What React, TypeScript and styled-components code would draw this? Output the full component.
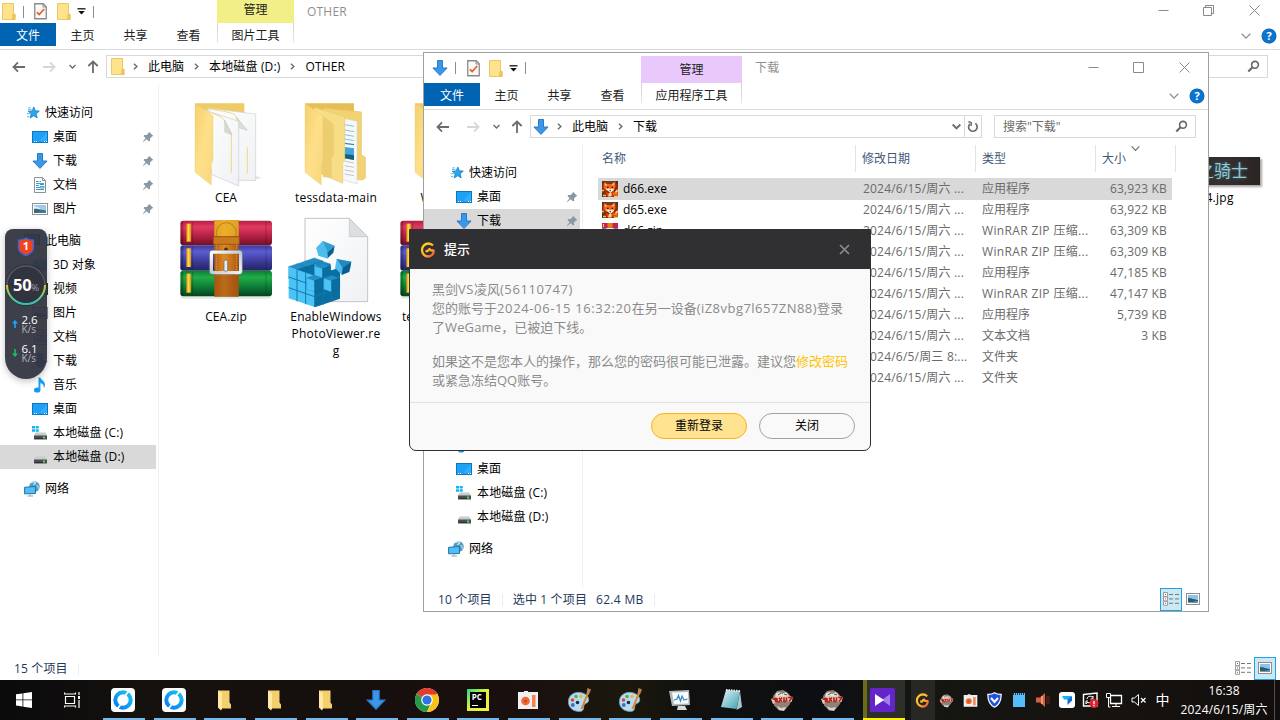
import React from "react";
import styled, { createGlobalStyle, css } from "styled-components";

const GlobalStyle = createGlobalStyle`
  * { box-sizing: border-box; }
  body { margin: 0; overflow: hidden; background: #fff; }
  #root { font: 12px/16px "Open Sans", "Noto Sans CJK SC", sans-serif; color: #000; }
  svg { display: block; flex: none; }
`;

/* ---------- shared ---------- */

const Desktop = styled.div`
  position: relative;
  width: 1280px;
  height: 720px;
  overflow: hidden;
  background: #fff;
`;

const Text = styled.span<{ $ls?: number }>`
  white-space: pre;
  letter-spacing: ${(p) => p.$ls ?? 0}px;
`;

/* ---------- small icons ---------- */

const FolderIcon = () => (
  <svg width="14" height="17" viewBox="0 0 14 17">
    <path d="M.5.5h11v10.5l1.5 1v4.500H.5z" fill="#ffe28c" stroke="#ecc862" />
    <path d="M10.800 16V12l2.200-1v5z" fill="#f7d36f" stroke="#dfb445" strokeWidth=".8" />
  </svg>
);

const CheckDocIcon = () => (
  <svg width="13" height="17" viewBox="0 0 13 17">
    <path d="M.75.75h8.500l3 3v12H.75z" fill="#fafafa" stroke="#8a8a8a" strokeWidth="1.300" />
    <path d="M9 1v3h3" fill="none" stroke="#8a8a8a" />
    <path d="M2.800 9.300l2.400 2.200 5-5.500" fill="none" stroke="#e4622d" strokeWidth="1.800" />
  </svg>
);

const DownArrowIcon = ({ size = 16 }: { size?: number }) => (
  <svg width={size} height={size} viewBox="0 0 16 16">
    <path d="M5.500.5h5v7.500h4.600L8 15.400.9 8h4.600z" fill="#3b97e8" stroke="#2a7ac6" />
  </svg>
);

const StarIcon = () => (
  <svg width="16" height="16" viewBox="0 0 16 16">
    <path d="M9.800 2l1.500 3.800 4 .3-3.100 2.700 1 4.100-3.500-2.200-3.500 2.300 1-4.200L4.200 6.200l4-.3z" fill="#2aa5ee" stroke="#1b7cc2" strokeWidth=".8" />
    <path d="M4 4.300h3.400M2.800 8.700h3M3 11.700h2.300M4.500 2.800h2" stroke="#4ab8f5" />
  </svg>
);

const DesktopIcon = () => (
  <svg width="16" height="16" viewBox="0 0 16 16">
    <rect x=".5" y="2.500" width="15" height="11" fill="#1ba1f6" stroke="#0e75bf" />
    <path d="M15 3v9L7 12z" fill="#3cb2fb" opacity=".7" />
    <path d="M2 12.500h1M4 12.500h1M12 12.500h1M14 12.500h1" stroke="#fff" />
  </svg>
);

const DocIcon = () => (
  <svg width="16" height="16" viewBox="0 0 16 16">
    <path d="M2.500.5h8l3 3v12h-11z" fill="#fdfdfd" stroke="#8d9295" />
    <path d="M10.500.5v3h3" fill="none" stroke="#8d9295" />
    <path d="M4 4.500h2.500M7.500 4.500H9M4 8.500h3M8 7.500h4M4 10.500h4M4 12.500h8" stroke="#3e94c6" />
    <path d="M4 6.500h8M8.500 9.500H12v1.500H8.500z" stroke="#2fa9d8" fill="none" />
  </svg>
);

const PictureIcon = () => (
  <svg width="16" height="16" viewBox="0 0 16 16">
    <rect x=".5" y="2.500" width="15" height="11" fill="#fff" stroke="#8e9294" />
    <rect x="2" y="4" width="12" height="8" fill="#9cc9ee" />
    <path d="M2 5l4 1 3 2-7 1z" fill="#dfeefa" />
    <path d="M2 8c3-1 5 .5 12 1.500V12H2z" fill="#3d6a6b" />
    <path d="M5 12c3-2 6-2 9-2v2z" fill="#3a79b8" />
  </svg>
);

const PcIcon = () => (
  <svg width="16" height="16" viewBox="0 0 16 16">
    <rect x=".5" y="1.500" width="15" height="10" fill="#4db4ef" stroke="#4c6a7d" />
    <path d="M6 12h4v1.500h2v1H4v-1h2z" fill="#7a8a94" />
  </svg>
);

const CubeIcon = () => (
  <svg width="16" height="16" viewBox="0 0 16 16">
    <path d="M8 1l7 2.500v9L8 15.500 1 12.500v-9z" fill="#27b0cf" />
    <path d="M8 6l7-2.500v9L8 15.500z" fill="#1c98c4" />
    <path d="M8 1l7 2.500L8 6 1 3.500z" fill="#7fdcf0" />
  </svg>
);

const VideoIcon = () => (
  <svg width="16" height="16" viewBox="0 0 16 16">
    <rect x=".5" y="2.500" width="15" height="11" fill="#555" stroke="#333" />
    <rect x="3" y="4" width="10" height="8" fill="#7ec1ef" />
  </svg>
);

const MusicIcon = () => (
  <svg width="16" height="16" viewBox="0 0 16 16">
    <ellipse cx="5.200" cy="13" rx="3.200" ry="2.600" fill="#0d99f5" />
    <path d="M6.500 13V.5h1.900c.4 2.400 4.600 3.600 4.600 7 0 1.600-.6 2.800-1.500 3.500.8-2.600-.6-4.200-3.100-5V13z" fill="#149df7" />
  </svg>
);

const DriveIcon = ({ system }: { system?: boolean }) => (
  <svg width="16" height="16" viewBox="0 0 16 16">
    {system && <path d="M0 1h3v2.500H0zM3.700 1h3v2.500h-3zM0 4.200h3v2.500H0zM3.700 4.200h3v2.500h-3z" fill="#15b2f2" />}
    <path d="M3.500 7.500h10l1.500 3.500H2z" fill="#c9cccf" />
    <rect x="2" y="10.500" width="13" height="4" fill="#4b4e50" />
    <path d="M3 13.500h9" stroke="#2d2f30" />
    <rect x="11" y="11.500" width="2" height="2" fill="#4be04b" />
  </svg>
);

const NetworkIcon = () => (
  <svg width="16" height="16" viewBox="0 0 16 16">
    <circle cx="10.500" cy="5.500" r="5.200" fill="#4f9bc4" />
    <path d="M7 1.800c1.500-1.200 3.500-1 4.500-.3.500 1-1.500 1.200-2 2.500" fill="none" stroke="#cfe6f2" strokeWidth="1.300" />
    <path d="M12.500 4.500c1.500 0 2 1.500 1.500 3" fill="none" stroke="#a9d3ea" strokeWidth="1.300" />
    <path d="M.6 6.300l10.800-.8v7l-10.800.3z" fill="#55bdf7" stroke="#1c76ac" />
    <path d="M3.500 15h5.500M6 13v1.500" stroke="#8fa4af" />
  </svg>
);

const PinIcon = () => (
  <svg width="12" height="12" viewBox="0 0 12 12">
    <path d="M7 .8l4.300 4.300-1.300.4-2 2 .2 2.300-1.200.7-2.200-2.300L1.200 11l-.4-.3 2.800-3.500L1.500 5l.8-1.100 2.300.1 2-2z" fill="#8b98a3" />
  </svg>
);

const ChevronSmall = ({ dir = "right", size = 7, color = "#6d6d6d", width = 1.6 }: { dir?: "right" | "down"; size?: number; color?: string; width?: number }) => (
  <svg width={size} height={size} viewBox="0 0 8 8">
    <path d={dir === "right" ? "M2.200.8L5.600 4 2.200 7.200" : "M.6 2.200L4 5.700l3.400-3.500"} fill="none" stroke={color} strokeWidth={width} />
  </svg>
);

const ArrowGlyph = ({ kind, color }: { kind: "left" | "right" | "up"; color: string }) => (
  <svg width="14" height="14" viewBox="0 0 14 14">
    <g transform={`rotate(${kind === "left" ? 0 : kind === "up" ? 90 : 180} 7 7)`}>
      <path d="M13 7H1.800M6 2.300L1.500 7 6 11.700" fill="none" stroke={color} strokeWidth="1.800" />
    </g>
  </svg>
);

const SearchGlyph = () => (
  <svg width="13" height="13" viewBox="0 0 13 13">
    <circle cx="8" cy="4.800" r="3.400" fill="none" stroke="#666" strokeWidth="1.600" />
    <path d="M5.500 7.300L1.300 11.500" stroke="#666" strokeWidth="2" />
  </svg>
);

const HelpGlyph = styled.span`
  width: 14px;
  height: 14px;
  border-radius: 50%;
  background: #0b74d1;
  box-shadow: 0 0 0 .5px #07589f;
  color: #fff;
  font: bold 11px/14px "Open Sans", sans-serif;
  text-align: center;
`;

const DetailsGlyph = () => (
  <svg width="17" height="14" viewBox="0 0 17 14">
    <path d="M.5.500h4v4h-4zM.5 4.900h4v4h-4zM.5 9.300h4v4h-4z" fill="#fff" stroke="#9b9b9b" />
    <path d="M2 2.500h1M2 6.900h1M2 11.300h1" stroke="#7a5b5b" />
    <path d="M6 2.500h4M12 2.500h4M6 6.900h4M12 6.900h4M6 11.300h4M12 11.300h4" stroke="#777" />
  </svg>
);

const ThumbGlyph = () => (
  <svg width="14" height="12" viewBox="0 0 14 12">
    <rect x=".5" y=".5" width="13" height="11" fill="#fff" stroke="#8e8e8e" />
    <rect x="2" y="2" width="10" height="7.500" fill="#8fc0ee" />
    <path d="M2 5c3 0 5 1 10 2v2.500H2z" fill="#2e5f66" />
    <path d="M6 9.500c2-1.500 4-1.500 6-1.500v1.500z" fill="#4a8fd0" />
  </svg>
);

/* ---------- explorer window ---------- */

const WindowFrame = styled.section<{ $floating?: boolean }>`
  position: absolute;
  display: flex;
  flex-direction: column;
  background: #fff;
  ${(p) =>
    p.$floating
      ? css`left: 423px; top: 52px; width: 786px; height: 560px; border: 1px solid #a0a0a0;`
      : css`left: 0; top: 0; width: 1280px; height: 680px;`}
`;

const TitleBar = styled.div<{ $h: number }>`
  display: flex;
  height: ${(p) => p.$h}px;
  padding-right: ${(p) => (p.$h === 23 ? 2 : 0)}px;
`;

const QuickBar = styled.div<{ $pad: number }>`
  display: flex;
  align-items: center;
  width: 217px;
  padding-left: ${(p) => p.$pad}px;
`;

const Divider = styled.span<{ $ml?: number; $mr?: number }>`
  width: 1px;
  height: 12px;
  margin: 0 ${(p) => p.$mr ?? 0}px 0 ${(p) => p.$ml ?? 0}px;
  background: #8c8c8c;
`;

const Gap = styled.span<{ $w: number }>`
  width: ${(p) => p.$w}px;
  flex: none;
`;

const ContextTab = styled.div<{ $color: string; $w: number; $top: number }>`
  width: ${(p) => p.$w}px;
  margin-top: ${(p) => p.$top}px;
  padding-top: ${(p) => (p.$top ? 6 : 2)}px;
  background: ${(p) => p.$color};
  color: #222;
  text-align: center;
`;

const WindowTitle = styled.div<{ $top: number }>`
  flex: 1;
  padding: ${(p) => p.$top}px 0 0 13px;
  color: #8f8f8f;
  letter-spacing: 0.2px;
`;

const WindowButtons = styled.div<{ $top: number }>`
  display: flex;
  margin-top: ${(p) => p.$top}px;
  padding-right: 1px;
`;

const WindowButton = styled.div`
  width: 45.5px;
  height: 20px;
  display: flex;
  align-items: center;
  justify-content: center;
`;

const Ribbon = styled.div`
  display: flex;
  height: 27px;
  border-bottom: 1px solid #dadbdc;
  color: #222;
`;

const FileTab = styled.div`
  width: 56px;
  height: 23px;
  background: #0063b1;
  color: #fff;
  text-align: center;
  line-height: 25px;
`;

const RibbonTab = styled.div`
  width: 53px;
  line-height: 25px;
  text-align: center;
`;

const ContextRibbon = styled.div<{ $w: number }>`
  width: ${(p) => p.$w}px;
  height: 20px;
  margin-left: 2px;
  line-height: 25px;
  text-align: center;
  border: solid;
  border-width: 0 1px;
  border-image: linear-gradient(#cfcfcf, #e9e9e9) 1;
`;

const RibbonEnd = styled.div`
  margin-left: auto;
  display: flex;
  align-items: center;
  gap: 11px;
  height: 26px;
  padding-right: 4px;
`;

const NavRow = styled.div`
  display: flex;
  align-items: center;
  height: 35px;
  padding: 5px 12px 7px;
`;

const NavIcons = styled.div`
  display: flex;
  align-items: center;
  width: 94px;
`;

const AddressBox = styled.div`
  flex: 1;
  display: flex;
  align-items: center;
  height: 23px;
  border: 1px solid #d9d9d9;
  padding-left: 2px;
`;

const RefreshCell = styled.div`
  display: flex;
  align-items: center;
  justify-content: center;
  width: 17px;
  height: 21px;
  border-left: 1px solid #d9d9d9;
`;

const SearchBox = styled.div`
  display: flex;
  align-items: center;
  justify-content: space-between;
  width: 202px;
  height: 23px;
  margin-left: 12px;
  padding: 0 7px 0 8px;
  border: 1px solid #d9d9d9;
  color: #6a6a6a;
`;

const Body = styled.div`
  display: flex;
  flex: 1;
  min-height: 0;
`;

const Tree = styled.nav`
  width: 159px;
  padding-top: 16px;
  border-right: 1px solid #f0f0f0;
  overflow: hidden;
`;

const TreeRow = styled.div<{ $level: number; $gap?: boolean; $active?: boolean }>`
  display: flex;
  align-items: center;
  gap: 5px;
  width: 156px;
  height: 24px;
  margin-top: ${(p) => (p.$gap ? 8 : 0)}px;
  padding: 0 2px 0 ${(p) => (p.$level === 1 ? 24 : 32)}px;
  background: ${(p) => (p.$active ? "#d9d9d9" : "transparent")};
`;

const PinSlot = styled.span`
  margin-left: auto;
`;

const StatusBar = styled.footer`
  display: flex;
  align-items: center;
  height: 24px;
  padding-left: 14px;
  color: #1e395b;
`;

const StatusTexts = styled.div`
  display: flex;
  align-items: center;
  padding-top: 2px;
`;

const StatusRule = styled.span<{ $m: string }>`
  width: 1px;
  height: 12px;
  background: #ececec;
  margin: ${(p) => p.$m};
`;

const ViewModes = styled.div<{ $pr: number }>`
  margin-left: auto;
  display: flex;
  padding-right: ${(p) => p.$pr}px;
`;

const ViewMode = styled.span<{ $on?: boolean }>`
  display: flex;
  align-items: center;
  justify-content: center;
  width: 22px;
  height: 23px;
  border: 1px solid ${(p) => (p.$on ? "#26a0da" : "transparent")};
  background: ${(p) => (p.$on ? "#cbe8f6" : "transparent")};
`;

type TreeEntry = { label: string; icon: React.ReactNode; level: number; gap?: boolean; pin?: boolean; key: string };

const quickEntries: TreeEntry[] = [
  { key: "quick", label: "快速访问", icon: <StarIcon />, level: 1 },
  { key: "q-desktop", label: "桌面", icon: <DesktopIcon />, level: 2, pin: true },
  { key: "q-down", label: "下载", icon: <DownArrowIcon />, level: 2, pin: true },
];

const middleEntries: TreeEntry[] = [
  { key: "q-doc", label: "文档", icon: <DocIcon />, level: 2, pin: true },
  { key: "q-pic", label: "图片", icon: <PictureIcon />, level: 2, pin: true },
  { key: "pc", label: "此电脑", icon: <PcIcon />, level: 1, gap: true },
  { key: "3d", label: "3D 对象", icon: <CubeIcon />, level: 2 },
  { key: "video", label: "视频", icon: <VideoIcon />, level: 2 },
  { key: "pic", label: "图片", icon: <PictureIcon />, level: 2 },
  { key: "doc", label: "文档", icon: <DocIcon />, level: 2 },
  { key: "down", label: "下载", icon: <DownArrowIcon />, level: 2 },
  { key: "music", label: "音乐", icon: <MusicIcon />, level: 2 },
];

const driveEntries: TreeEntry[] = [
  { key: "desktop", label: "桌面", icon: <DesktopIcon />, level: 2 },
  { key: "c", label: "本地磁盘 (C:)", icon: <DriveIcon system />, level: 2 },
  { key: "d", label: "本地磁盘 (D:)", icon: <DriveIcon />, level: 2 },
  { key: "net", label: "网络", icon: <NetworkIcon />, level: 1, gap: true },
];

const fullTree = [...quickEntries, ...middleEntries, ...driveEntries];

/* Rows under the message box keep their icon and height but carry no label. */
const coveredTree = [...quickEntries, ...middleEntries.map((e) => ({ ...e, label: "" })), ...driveEntries];

type ExplorerProps = {
  floating?: boolean;
  title: string;
  icon: React.ReactNode;
  toolName: string;
  toolColor: string;
  toolWidth: number;
  crumbs: string[];
  tree: TreeEntry[];
  activeKey: string;
  search: string;
  children: React.ReactNode;
  status: React.ReactNode;
};

const Explorer = (p: ExplorerProps) => (
  <WindowFrame $floating={p.floating}>
    <TitleBar $h={p.floating ? 30 : 23}>
      <QuickBar $pad={p.floating ? 8 : 2}>
        {p.icon}
        <Divider $ml={7} $mr={p.floating ? 11 : 10} />
        <CheckDocIcon />
        <Gap $w={p.floating ? 9 : 10} />
        <FolderIcon />
        <Gap $w={6} />
        <svg width="9" height="7" viewBox="0 0 9 7"><path d="M.5.800h8" stroke="#111" strokeWidth="1.300" /><path d="M1.200 3h6.600L4.500 6.500z" fill="#111" /></svg>
        <Divider $ml={7} />
      </QuickBar>
      <ContextTab $color={p.toolColor} $w={p.toolWidth} $top={p.floating ? 3 : 0}>管理</ContextTab>
      <WindowTitle $top={p.floating ? 7 : 4}>{p.title}</WindowTitle>
      <WindowButtons $top={p.floating ? 4 : 0}>
        {(["min", "max", "close"] as const).map((k) => (
          <WindowButton key={k}>
            <svg width="11" height="11" viewBox="0 0 11 11" fill="none" stroke="#8a8a8a">
              {k === "min" && <path d="M.5 5.500h10" />}
              {k === "max" && (p.floating ? <path d="M.5.500h10v10H.5z" /> : <path d="M.5 2.500h8v8h-8zM2.500 2.500v-2h8v8h-2" />)}
              {k === "close" && <path d="M.5.500l10 10M10.500.500l-10 10" />}
            </svg>
          </WindowButton>
        ))}
      </WindowButtons>
    </TitleBar>
    <Ribbon>
      <FileTab>文件</FileTab>
      <RibbonTab>主页</RibbonTab>
      <RibbonTab>共享</RibbonTab>
      <RibbonTab>查看</RibbonTab>
      <ContextRibbon $w={p.toolWidth}>{p.toolName}</ContextRibbon>
      <RibbonEnd>
        <ChevronSmall dir="down" size={10} color="#8c8c8c" width={1} />
        <HelpGlyph>?</HelpGlyph>
      </RibbonEnd>
    </Ribbon>
    <NavRow>
      <NavIcons>
        <ArrowGlyph kind="left" color="#6b6b6b" />
        <Gap $w={16} />
        <ArrowGlyph kind="right" color="#d6d6d6" />
        <Gap $w={13} />
        <ChevronSmall dir="down" />
        <Gap $w={10} />
        <ArrowGlyph kind="up" color="#6b6b6b" />
      </NavIcons>
      <AddressBox>
        {p.floating ? p.icon : <><Gap $w={2} /><FolderIcon /></>}
        {p.crumbs.map((c, i) => (
          <React.Fragment key={c}>
            <Gap $w={i ? 9 : 7} />
            <ChevronSmall />
            <Gap $w={9} />
            <Text $ls={/^[^A-Z]+$/.test(c) ? 0 : 0.15}>{c}</Text>
          </React.Fragment>
        ))}
        <Gap $w={0} style={{ marginLeft: "auto" }} />
        <ChevronSmall dir="down" size={9} width={1.800} />
        <Gap $w={3} />
        <RefreshCell>
          <svg width="12" height="12" viewBox="0 0 12 12"><path d="M8.300 2.400A4.300 4.300 0 1 1 3 2.800" fill="none" stroke="#6b6b6b" strokeWidth="1.700" /><path d="M3.200 .9H.8M3.700.900v4" fill="none" stroke="#6b6b6b" strokeWidth="1.500" transform="translate(.5 0)" /></svg>
        </RefreshCell>
      </AddressBox>
      <SearchBox>
        <Text>{p.search}</Text>
        <SearchGlyph />
      </SearchBox>
    </NavRow>
    <Body>
      <Tree>
        {p.tree.map((e) => (
          <TreeRow key={e.key} $level={e.level} $gap={e.gap} $active={e.key === p.activeKey}>
            {e.icon}
            {e.label && <Text $ls={e.label.length > 5 ? 0.15 : 0}>{e.label}</Text>}
            {e.pin && <PinSlot><PinIcon /></PinSlot>}
          </TreeRow>
        ))}
      </Tree>
      {p.children}
    </Body>
    <StatusBar>{p.status}</StatusBar>
  </WindowFrame>
);

/* ---------- icon grid ---------- */

const Grid = styled.div`
  display: grid;
  grid-template-columns: repeat(10, 110px);
  grid-auto-rows: 119px;
  padding: 7px 0 0 12px;
`;

const Tile = styled.div<{ $col: number; $row: number }>`
  grid-column: ${(p) => p.$col};
  grid-row: ${(p) => p.$row};
  display: flex;
  flex-direction: column;
  align-items: center;
  white-space: pre;
  text-align: center;
  line-height: 17px;
`;

const TileName = styled.span<{ $ls?: number }>`
  margin-top: 1px;
  letter-spacing: ${(p) => p.$ls ?? 0}px;
`;

const GradientDefs = () => (
  <svg width="0" height="0" style={{ position: "absolute" }}>
    <defs>
      <linearGradient id="flap" x1="0" y1="0" x2="1" y2="1"><stop offset="0" stopColor="#f3d06c" /><stop offset=".5" stopColor="#ffe08a" /><stop offset="1" stopColor="#f5d77c" /></linearGradient>
      <linearGradient id="page" x1="0" y1="0" x2="1" y2="1"><stop offset="0" stopColor="#fff" /><stop offset="1" stopColor="#eff1f4" /></linearGradient>
      {[["red", "#b01f42", "#e23a60", "#6f0f26"], ["blue", "#3a3a98", "#5d5cd2", "#232362"], ["green", "#0c7a35", "#22ad48", "#07411d"]].map(([id, a, b, c]) => (
        <linearGradient key={id} id={`book-${id}`} x1="0" y1="0" x2="0" y2="1"><stop offset="0" stopColor={a} /><stop offset=".25" stopColor={b} /><stop offset=".65" stopColor={a} /><stop offset="1" stopColor={c} /></linearGradient>
      ))}
      <linearGradient id="belt" x1="0" y1="0" x2="1" y2="0"><stop offset="0" stopColor="#b35f12" /><stop offset=".4" stopColor="#dc8a26" /><stop offset="1" stopColor="#ac5a10" /></linearGradient>
      <linearGradient id="gold" x1="0" y1="0" x2="1" y2="0"><stop offset="0" stopColor="#e08f0a" /><stop offset=".5" stopColor="#ffe04a" /><stop offset="1" stopColor="#d88708" /></linearGradient>
      <linearGradient id="steel" x1="0" y1="0" x2="1" y2="1"><stop offset="0" stopColor="#fff" /><stop offset=".5" stopColor="#c4cad1" /><stop offset="1" stopColor="#f1f3f5" /></linearGradient>
    </defs>
  </svg>
);

const PaperFolder = () => (
  <svg width="96" height="96" viewBox="54 6 288 288">
    <path d="M236 275l72-10-20-8z" fill="#e9e9e9" />
    <path d="M105 40h148v60l-90 60z" fill="#eecb65" />
    <path d="M142 54l145 18v200l-51-2z" fill="url(#page)" stroke="#cfcfcf" strokeWidth="2" />
    <path d="M142 56c60 10 80 10 90 28l28 38M262 172v78" fill="none" stroke="#f1d58b" strokeWidth="3" />
    <path d="M228 82l34 38-26-6z" fill="#ddd" stroke="#bbb" />
    <path d="M125 56l111 38v194l-80-34z" fill="url(#page)" stroke="#cfcfcf" strokeWidth="2" />
    <path d="M128 60c40 16 56 14 68 36l18 34v118" fill="none" stroke="#f1d58b" strokeWidth="3" />
    <path d="M194 90l22 44-22-8z" fill="#d8d8d8" stroke="#b5b5b5" />
    <path d="M105 40l54 38v134l-5 8v65l-49-38z" fill="url(#flap)" stroke="#e9c766" />
  </svg>
);

const ImageFolder = () => (
  <svg width="96" height="96" viewBox="384 6 288 288">
    <path d="M435 40h147v60l-90 60z" fill="#e6be55" />
    <path d="M490 54l114 12v128l12 8v62l-8 6-118-10z" fill="#f2d272" stroke="#e5c467" strokeWidth="2" />
    <path d="M520 78l71 16v188l-60-18z" fill="#f7f8fa" stroke="#d5d5d5" strokeWidth="2" />
    <path d="M554 104l28 5M554 120l28 5M554 134l28 5M554 147l28 5" stroke="#6eb7de" strokeWidth="2.500" />
    <path d="M554 160l28 4" stroke="#1d8fd0" strokeWidth="4" />
    <path d="M554 171l28 4v35l-28-5z" fill="#3fa3dc" />
    <path d="M554 192l28 4v14l-28-5z" fill="#1e5f74" />
    <path d="M554 214l28 5M554 227l28 5M554 240l28 5M554 252l28 5" stroke="#aaa" strokeWidth="2" />
    <path d="M462 52l92 28v132l-6 6v62l-64-28z" fill="#f8dd87" stroke="#e9c96e" strokeWidth="2" />
    <path d="M486 76l35 26v95l-6 8v60l-29-12z" fill="#e8ca6c" opacity=".8" />
    <path d="M435 40l54 38v134l-5 8v65l-49-38z" fill="url(#flap)" stroke="#e9c766" />
  </svg>
);

const WinRarArt = () => (
  <svg width="96" height="96" viewBox="54 3 288 288">
    <rect x="62" y="250" width="272" height="16" rx="8" fill="#dfeadf" />
    {[["red", 32, 74], ["blue", 106, 76], ["green", 182, 77]].map(([c, y, h]) => (
      <g key={c as string}>
        <rect x="61" y={y} width="275" height={h} rx="9" fill={`url(#book-${c})`} />
        <rect x="62" y={(y as number) + 3} width="8" height={(h as number) - 6} fill="#000" opacity=".25" />
        <path d={`M98 ${(y as number) + 4}v${(h as number) - 8}M318 ${(y as number) + 4}v${(h as number) - 8}`} stroke="#000" strokeWidth="2" opacity=".3" />
        <rect x="79" y={(y as number) + 9} width="14" height={(h as number) - 20} fill="url(#gold)" />
      </g>
    ))}
    <rect x="163" y="30" width="73" height="230" fill="url(#belt)" />
    <path d="M163 30h73v48h-73z" fill="#f0b92e" opacity=".75" />
    <circle cx="199" cy="68" r="30" fill="none" stroke="#a8650e" strokeWidth="2" />
    <path d="M160 80h78v23h-78z" fill="#c97a1c" stroke="#8d4a0a" strokeWidth="2" />
    <path d="M169 104v92M230 104v92" stroke="#f1b45a" strokeDasharray="4 4" strokeWidth="2" />
    <circle cx="198" cy="118" r="5.500" fill="#4e2a08" />
    <rect x="154" y="126" width="88" height="62" rx="5" fill="none" stroke="url(#steel)" strokeWidth="10" />
    <rect x="148" y="121" width="99" height="73" rx="8" fill="none" stroke="#69727b" strokeWidth="1.500" />
    <rect x="192" y="150" width="11" height="34" rx="5" fill="#e7ebee" stroke="#59626b" strokeWidth="2" />
    <path d="M163 196h73v64h-73z" fill="#9c4a0e" opacity=".5" />
  </svg>
);

const Cube = ({ x, y, s = 26 }: { x: number; y: number; s?: number }) => (
  <g>
    <path d={`M${x} ${y}l${s}-${s * 0.35} ${s} ${s * 0.35}-${s} ${s * 0.35}z`} fill="#1f8fc6" stroke="#14719f" />
    <path d={`M${x} ${y}l${s} ${s * 0.35}v${s * 1.4}l-${s}-${s * 0.35}z`} fill="#4cc3f7" stroke="#1b86b8" />
    <path d={`M${x + s * 2} ${y}l-${s} ${s * 0.35}v${s * 1.4}l${s}-${s * 0.35}z`} fill="#0b6ea0" stroke="#085a85" />
  </g>
);

const RegistryArt = () => (
  <svg width="96" height="96" viewBox="384 3 288 288">
    <path d="M435 25h133l55 55v195H435z" fill="url(#page)" stroke="#c2c4c6" strokeWidth="3" />
    <path d="M568 25v55h55z" fill="#dcdee0" stroke="#c2c4c6" strokeWidth="2" />
    <Cube x={437} y={153} />
    <Cube x={411} y={162} />
    <Cube x={463} y={162} s={24} />
    <Cube x={386} y={170} />
    <path d="M386 170l78 27v94l-78-26z" fill="#4cc3f7" />
    <path d="M464 200l76-28v94l-76 26z" fill="#0b6ea0" />
    <path d="M386 201l78 27M386 233l78 27M411 178v96M437 188v95M464 200v92M464 228l76-27M464 260l76-27M490 190v94M515 180v95" stroke="#0f79ad" strokeWidth="3" fill="none" />
    <Cube x={464} y={168} s={24} />
    <Cube x={440} y={204} s={24} />
    <Cube x={491} y={204} s={24} />
    <path d="M489 93l35 14-22 20-34-12z" fill="#2f9fd2" />
    <path d="M489 93l-20 22 6 22 28 9 0-20z" fill="#4fbdeb" />
    <path d="M524 107l-22 20 1 18 17-17z" fill="#07608f" />
    <path d="M530 147l44 8-3 20-26 19-20-20z" fill="#4fbdeb" />
    <path d="M530 147l44 8-26 18z" fill="#2389bd" />
    <path d="M574 155l-26 18-3 22 23-9z" fill="#07608f" />
  </svg>
);

const PhotoWrap = styled.div`
  width: 96px;
  height: 96px;
  padding: 65px 4px 3px;
`;

const Photo = styled.div`
  height: 28px;
  background: linear-gradient(90deg, #2c2c2c, #35302d 60%, #2a2523);
  box-shadow: 2px 2px 2px rgba(0, 0, 0, 0.35);
  color: #9cc3d0;
  font-size: 17px;
  line-height: 27px;
  text-align: right;
  padding-right: 12px;
  text-shadow: 0 0 3px #2a7f9b;
`;

/* ---------- details list ---------- */

const ListPane = styled.div`
  flex: 1;
  padding-left: 15px;
`;

const ListHead = styled.div`
  display: grid;
  grid-template-columns: 258px 120px 120px 80px;
  height: 27px;
  margin-bottom: 6px;
  color: #43597a;
`;

const HeadCell = styled.div`
  position: relative;
  border-right: 1px solid #e3e3e3;
  padding: 6px 0 0 6px;
  &:first-child { padding-left: 4px; }
`;

const SortMark = styled.span`
  position: absolute;
  left: 35px;
  top: -1px;
`;

const ListRow = styled.div<{ $active?: boolean }>`
  display: grid;
  grid-template-columns: 265px 119px 121px 64px;
  align-items: center;
  width: 574px;
  height: 22px;
  margin-bottom: -1px;
  background: ${(p) => (p.$active ? "#d9d9d9" : "transparent")};
  color: #6a6a6a;
`;

const NameCell = styled.span`
  display: flex;
  align-items: center;
  gap: 5px;
  padding-left: 4px;
  color: #000;
`;

const SizeCell = styled.span`
  text-align: right;
  letter-spacing: 0.15px;
  white-space: pre;
`;

const FoxIcon = () => (
  <svg width="16" height="16" viewBox="0 0 16 16">
    <rect width="16" height="16" fill="#8f2c10" />
    <path d="M4 0h8v2H4z" fill="#5c4a1c" />
    <path d="M0 0h2v2H0zM14 0h2v3h-2zM0 12h2v4H0z" fill="#3a3a26" />
    <path d="M2 1l3.500 2h4L13 .500l.5 5.500-2 3.500H4L1.500 7z" fill="#f5641e" />
    <path d="M3 3l1.500 1.500M12 2.300l-1.500 2" stroke="#ffcf7a" strokeWidth="1.400" />
    <path d="M3.500 7.800l3-.8 1.500 1 3-1 1 2-3.500 3z" fill="#ffedcc" />
    <path d="M5.200 6.500h1.300M9.700 6.500H11M7.700 9.500h1" stroke="#2a0d05" strokeWidth="1.300" />
    <path d="M4 11l4 1.500L12 10l1 5H5z" fill="#e63c10" />
    <path d="M7 12h2.500v3.500H6z" fill="#ffd690" />
    <path d="M11 13l4.500-5v6z" fill="#fb7f22" />
    <path d="M13 11l2.500-3v3z" fill="#ffe0a0" />
    <path d="M0 9.500h2M1 14.500h3M12 15.300h4" stroke="#ecc837" strokeWidth="1.500" />
  </svg>
);

const RarSmall = () => (
  <svg width="16" height="16" viewBox="0 0 16 16">
    <rect y="0" width="16" height="5.500" fill="#c22450" />
    <rect y="5.500" width="16" height="5.500" fill="#4a49b8" />
    <rect y="11" width="16" height="5" fill="#178a3c" />
    <rect x="5.500" y="0" width="5" height="16" fill="#e07f1b" />
    <path d="M4.500 5.500h7v4h-7z" fill="none" stroke="#e5e8ea" />
    <path d="M1.500 1v3M1.500 7v3" stroke="#ffd93b" />
  </svg>
);

/* Rows whose name cell lies under the message box list only their visible columns. */
const files: [string, "fox" | "rar" | "none", string, string, string][] = [
  ["d66.exe", "fox", "2024/6/15/周六 ...", "应用程序", "63,923 KB"],
  ["d65.exe", "fox", "2024/6/15/周六 ...", "应用程序", "63,922 KB"],
  ["d66.zip", "rar", "2024/6/15/周六 ...", "WinRAR ZIP 压缩...", "63,309 KB"],
  ["", "none", "2024/6/15/周六 ...", "WinRAR ZIP 压缩...", "63,309 KB"],
  ["", "none", "2024/6/15/周六 ...", "应用程序", "47,185 KB"],
  ["", "none", "2024/6/15/周六 ...", "WinRAR ZIP 压缩...", "47,147 KB"],
  ["", "none", "2024/6/15/周六 ...", "应用程序", "5,739 KB"],
  ["", "none", "2024/6/15/周六 ...", "文本文档", "3 KB"],
  ["", "none", "2024/6/5/周三 8:...", "文件夹", ""],
  ["", "none", "2024/6/15/周六 ...", "文件夹", ""],
];

/* ---------- dialog ---------- */

const Dialog = styled.div`
  position: absolute;
  left: 409px;
  top: 229px;
  width: 462px;
  height: 222px;
  display: flex;
  flex-direction: column;
  background: #f9f9f9;
  border: 1px solid #303032;
  border-radius: 0 0 7px 7px;
  overflow: hidden;
`;

const DialogHead = styled.div`
  display: flex;
  align-items: center;
  height: 39px;
  padding: 0 20px 0 10px;
  background: #303032;
  color: #fff;
  font-size: 13px;
  font-weight: 500;
`;

const DialogTitle = styled.span`
  flex: 1;
  margin: -2px 0 0 8px;
`;

const DialogBody = styled.div`
  flex: 1;
  padding: 11px 0 0 22px;
  color: #8b8b8b;
  font-size: 13px;
  line-height: 19px;
  border-bottom: 1px solid #e2e2e2;
`;

const Line = styled.div<{ $mt?: number }>`
  height: 19px;
  margin-top: ${(p) => p.$mt ?? 0}px;
  white-space: pre;
`;

const Link = styled.span`
  color: #ffc400;
`;

const DialogFoot = styled.div`
  display: flex;
  justify-content: flex-end;
  gap: 12px;
  height: 47px;
  padding: 10px 15px 0 0;
`;

const PillButton = styled.button<{ $primary?: boolean }>`
  width: 96px;
  height: 26px;
  padding: 0;
  border: 1px solid ${(p) => (p.$primary ? "#fbb215" : "#a3a3a3")};
  border-radius: 13px;
  background: ${(p) => (p.$primary ? "#ffe391" : "#f9f9f9")};
  color: #000;
  font: 12px/22px "Open Sans", "Noto Sans CJK SC", sans-serif;
`;

const WeGameIcon = ({ size = 16 }: { size?: number }) => (
  <svg width={size} height={size} viewBox="0 0 16 16">
    <defs><linearGradient id="wg" x1="0" y1="0" x2="1" y2="1"><stop offset="0" stopColor="#ffd42a" /><stop offset=".6" stopColor="#ffae2a" /><stop offset="1" stopColor="#fb4a3e" /></linearGradient></defs>
    <path d="M13 3.600A6.200 6.200 0 0 0 8.500 1.500C5 1.500 2 4.300 2 8s2.800 6.500 6.200 6.500c3.300 0 5.800-2.500 5.300-6H11L9.500 7 7.300 9.300 5.500 8.800" fill="none" stroke="url(#wg)" strokeWidth="2.300" strokeLinejoin="round" />
  </svg>
);

/* ---------- speed widget ---------- */

const Widget = styled.aside`
  position: absolute;
  left: 5px;
  top: 229px;
  width: 42px;
  height: 150px;
  display: flex;
  flex-direction: column;
  align-items: center;
  background: rgba(49, 51, 64, 0.94);
  border-radius: 8px 8px 21px 21px;
  box-shadow: 0 2px 7px rgba(0, 0, 0, 0.25);
  color: #fff;
`;

const Shield = styled.div`
  position: relative;
  width: 18px;
  height: 20px;
  margin-top: 8px;
`;

const ShieldCount = styled.span`
  position: absolute;
  inset: 0;
  font: bold 11px/18px "Open Sans", sans-serif;
  text-align: center;
`;

const Gauge = styled.div`
  position: relative;
  width: 44px;
  height: 44px;
  margin-top: 6px;
`;

const GaugeLabel = styled.span`
  position: absolute;
  inset: 0;
  display: flex;
  justify-content: center;
  align-items: baseline;
  font: bold 16.5px/43px "Open Sans", sans-serif;
  letter-spacing: -0.3px;
  small { font-size: 9.5px; font-weight: 400; color: #a0a1aa; }
`;

const Speed = styled.div<{ $mt: number }>`
  display: flex;
  align-items: center;
  gap: 4px;
  width: 32px;
  height: 20px;
  margin: ${(p) => p.$mt}px 0 0 3px;
  font-size: 11.5px;
  line-height: 9px;
  small { display: block; font-size: 10px; line-height: 10px; color: #b2b3bb; }
`;

/* ---------- taskbar ---------- */

const Taskbar = styled.div`
  position: absolute;
  left: 0;
  top: 680px;
  width: 1280px;
  height: 40px;
  display: flex;
  background: linear-gradient(90deg, #0b0b0c 0%, #15110e 12%, #150f0d 27%, #1a0f0f 40%, #1b180d 49%, #10110f 54%, #0c0e12 64%, #141612 72%, #171310 84%, #120e0d 100%);
  color: #fff;
`;

const SystemSlot = styled.div`
  width: 48px;
  display: flex;
  align-items: center;
  justify-content: center;
`;

const Apps = styled.div`
  display: flex;
  gap: 8.65px;
  margin-left: 7px;
`;

const AppSlot = styled.div<{ $active?: boolean }>`
  display: flex;
  align-items: center;
  justify-content: center;
  width: 42px;
  height: 40px;
  border-bottom: 2px solid ${(p) => (p.$active ? "#fff200" : "#76b9ed")};
  padding: 2px 1.500px 0 0;
  ${(p) => p.$active && css`background: linear-gradient(90deg, #6f691a 4px, #2d2f2b 4px);`}
`;

const Tray = styled.div`
  display: flex;
  margin-left: 6px;
`;

const TraySlot = styled.div<{ $lit?: boolean }>`
  display: flex;
  align-items: center;
  justify-content: center;
  width: 24px;
  background: ${(p) => (p.$lit ? "#282724" : "transparent")};
  font-size: 14px;
`;

const Clock = styled.div`
  width: 100px;
  padding-top: 1px;
  line-height: 19px;
  text-align: center;
  letter-spacing: 0.15px;
  border-right: 1px solid #4d4d4d;
`;

const RingApp = () => (
  <svg width="24" height="24" viewBox="0 0 24 24">
    <defs><linearGradient id="ring" x1="0" y1="1" x2="1" y2="0"><stop offset="0" stopColor="#0b7bf5" /><stop offset="1" stopColor="#17c4ef" /></linearGradient></defs>
    <rect width="24" height="24" rx="4" fill="#fff" />
    <circle cx="12" cy="12" r="7.700" fill="none" stroke="url(#ring)" strokeWidth="4" />
    <path d="M14 8L18 2.500M10 16L6 21.500" stroke="#fff" strokeWidth="1.800" />
  </svg>
);

const TaskFolder = () => (
  <svg width="24" height="24" viewBox="0 0 24 24">
    <path d="M5 2.500h11.500v12l1.500 2v4H8z" fill="#f4d06c" />
    <path d="M5 2.500l4 2.500v15.500l-1 2-3-3z" fill="#ffe9a3" />
  </svg>
);

const ChromeIcon = () => (
  <svg width="24" height="24" viewBox="0 0 24 24">
    <circle cx="12" cy="12" r="12" fill="#fff" />
    <path d="M12 12L1.600 6A12 12 0 0 1 22.400 6z" fill="#e33b2e" />
    <path d="M12 12h5.200L12 24A12 12 0 0 1 1.600 6z" fill="#279847" />
    <path d="M12 6.500h10.600A12 12 0 0 1 12 24l5-9.500z" fill="#fbc116" />
    <circle cx="12" cy="12" r="5.800" fill="#fff" />
    <circle cx="12" cy="12" r="4.600" fill="#2f74e6" />
  </svg>
);

const PyCharmBox = styled.div`
  width: 22px;
  height: 22px;
  padding: 3px;
  background: linear-gradient(135deg, #20d789, #d8f23c 45%, #f7f33d);
`;

const PyCharmInner = styled.div`
  height: 16px;
  padding-left: 2px;
  background: #000;
  font: bold 8px/9px "Open Sans", sans-serif;
  &::after { content: ""; display: block; width: 6px; height: 1px; margin-top: 4px; background: #fff; }
`;

const CameraApp = ({ size = 22 }: { size?: number }) => (
  <svg width={size} height={size} viewBox="0 0 22 22">
    <path d="M1 3h6V2h4v1h10v17H1z" fill="#f0f0f0" />
    <circle cx="8.500" cy="12" r="4.300" fill="#ef6a35" />
    <circle cx="8.500" cy="12" r="1.500" fill="#c94a1c" />
    <rect x="15" y="6" width="3.500" height="12" fill="#f08352" />
  </svg>
);

const PaintApp = () => (
  <svg width="24" height="24" viewBox="0 0 24 24">
    <path d="M1.500 15C.5 8 7 3.500 13 4.500c6 .8 9.500 4.500 8.500 8.500-.8 2.600-3.500 2-4.500 4-.8 1.600.6 4-2 6C9 24.500 2.300 21.500 1.500 15z" fill="#b9dcf0" stroke="#6f9db8" />
    <circle cx="5.500" cy="12" r="1.800" fill="#d8443a" />
    <circle cx="9" cy="8.500" r="1.800" fill="#55b04b" />
    <circle cx="14" cy="8.500" r="1.800" fill="#edb63a" />
    <circle cx="5.800" cy="17" r="1.900" fill="#3d6fc6" />
    <circle cx="10.500" cy="14.500" r="1.800" fill="#16304a" />
    <path d="M21 5l-6.500 16" stroke="#d98a31" strokeWidth="2" />
    <path d="M19.500 5.500L20.500 0l3.500 1.500-2 5z" fill="#b78458" />
  </svg>
);

const MonitorApp = () => (
  <svg width="24" height="24" viewBox="0 0 24 24">
    <path d="M1 3l20-1 1 15-18 1z" fill="#b4b8bb" />
    <path d="M4 4.500l16-.5.500 11.500L6 16z" fill="#f6fbff" />
    <path d="M6 12l3-1 1.500-3.500 2 5.500 1.500-5 2 4 3.500-1" fill="none" stroke="#3985bd" strokeWidth="1.200" />
    <path d="M10 18h7l2 4H9z" fill="#d9dcde" />
  </svg>
);

const NotepadApp = () => (
  <svg width="24" height="24" viewBox="0 0 24 24">
    <defs><linearGradient id="np" x1="0" y1="0" x2="1" y2="1"><stop offset="0" stopColor="#dff5f7" /><stop offset="1" stopColor="#3d9fb2" /></linearGradient></defs>
    <path d="M7 2l14 1-3.500 18L2 19z" fill="url(#np)" />
    <path d="M21 3l2 16-5.500 3z" fill="#a8c8ce" />
    <path d="M7 2l14 1" stroke="#eee" strokeWidth="2" strokeDasharray="1.500 1" />
  </svg>
);

const BadgeApp = ({ size = 24 }: { size?: number }) => (
  <svg width={size} height={size} viewBox="0 0 24 24">
    <path d="M3 8l4-5 6-1 5 3 4 5-2 6-5 6-6 .5-5-5z" fill="#8d8178" />
    <path d="M6 5l4-1 2 2 4-2 3 4-14 1z" fill="#e6ddd3" />
    <path d="M8 7l3-2M14 6l3 1" stroke="#5d4c42" />
    <path d="M7 18l4 2 5-1-2 4-5-1z" fill="#dcd2c6" />
    <path d="M1 11c6-3 15-4 22-2l-1.500 5C15 12.500 9 13.500 3 16z" fill="#e6cfc4" />
    <path d="M2.500 11.500l3-1v4M7 10v4h3M9 9.700l3 4M12 9.500l-3 4M14 9.300v4h2M16.500 9.300v4.200M18 9.500h4l-3 4" fill="none" stroke="#b3251b" strokeWidth="1.700" />
  </svg>
);

const VsApp = () => (
  <svg width="25" height="24" viewBox="0 0 25 24">
    <rect width="25" height="24" rx="1.500" fill="#6424c9" />
    <path d="M20 6l-8 6 8 6z" fill="#a27fe2" />
    <path d="M5 6l9 6-9 6z" fill="#fff" />
  </svg>
);

const trayIcons: React.ReactNode[] = [
  <WeGameIcon size={15} />,
  <BadgeApp size={15} />,
  <CameraApp size={15} />,
  <svg width="15" height="16" viewBox="0 0 15 16"><path d="M7.500.8C9.500 2 12 2.500 14.200 2.400c0 6-1.500 10.200-6.700 12.800C2.300 12.600.8 8.400.8 2.400 3 2.500 5.500 2 7.500.8z" fill="#1f52e0" stroke="#fff" strokeWidth="1.200" /><path d="M4 6l3.500 4L11 6" fill="none" stroke="#fff" strokeWidth="2" /></svg>,
  <svg width="12" height="14" viewBox="0 0 12 14"><rect width="12" height="14" fill="#55bdfb" /><path d="M0 1h12" stroke="#2a3a44" strokeWidth="2" strokeDasharray="1 1" /></svg>,
  <svg width="14" height="14" viewBox="0 0 14 14"><path d="M0 4.500h4L9 0v14L4 9.500H0z" fill="#d3603d" /><path d="M6 3v8" stroke="#f3a98a" strokeWidth="1.500" /><path d="M11 3v8M13 3v8" stroke="#642b20" /></svg>,
  <svg width="16" height="16" viewBox="0 0 16 16"><rect width="16" height="16" rx="3" fill="#fff" /><path d="M3 4h9.500L10 7.500H5z" fill="#12b4f2" /><path d="M13 4v4.500L8.500 13V7.500z" fill="#1768ea" /></svg>,
  <svg width="17" height="16" viewBox="0 0 17 16"><path d="M1.500 2.500L15 1v13H1.500z" fill="none" stroke="#fff" strokeWidth="1.400" /><path d="M5 7a3 3 0 0 1 5-2l1-1v3H8.500M9 9a3 3 0 0 1-4 1.500L4 12V9h2" fill="none" stroke="#fff" /><circle cx="12" cy="11.500" r="4.500" fill="#e1222d" /><path d="M12 9v3.200M12 13v1.200" stroke="#fff" strokeWidth="1.300" /></svg>,
  <svg width="17" height="16" viewBox="0 0 17 16" fill="none" stroke="#fff"><path d="M4.500 3.500h11v8h-11z" strokeWidth="1.300" /><path d="M10 12v2.500M6 14.500h8M2.500 6v9h2" /><path d="M.5 1.500h4v4h-4z" fill="#15120f" /></svg>,
  <svg width="16" height="14" viewBox="0 0 16 14" fill="none" stroke="#fff"><path d="M1 5h2.500L7.500 1.500v11L3.500 9H1z" /><path d="M10 5l4.500 4.500M14.500 5L10 9.500" strokeWidth="1.200" /></svg>,
  "中",
];

const taskApps: React.ReactNode[] = [
  <RingApp />, <RingApp />, <TaskFolder />, <TaskFolder />, <TaskFolder />, <DownArrowIcon size={20} />, <ChromeIcon />,
  <PyCharmBox><PyCharmInner>PC</PyCharmInner></PyCharmBox>,
  <CameraApp />, <PaintApp />, <PaintApp />, <MonitorApp />, <NotepadApp />, <BadgeApp />, <BadgeApp />, <VsApp />,
];

/* ---------- page ---------- */

export default function App() {
  return (
    <>
      <GlobalStyle />
      <Desktop>
        <GradientDefs />
        <Explorer
          title="OTHER"
          icon={<FolderIcon />}
          toolName="图片工具"
          toolColor="#f2ef87"
          toolWidth={77}
          crumbs={["此电脑", "本地磁盘 (D:)", "OTHER"]}
          tree={fullTree}
          activeKey="d"
          search=""
          status={
            <>
              <StatusTexts>
                <Text $ls={0.15}>15 个项目</Text>
                <StatusRule $m="0 0 0 10px" />
              </StatusTexts>
              <ViewModes $pr={4}>
                <ViewMode><DetailsGlyph /></ViewMode>
                <ViewMode $on><ThumbGlyph /></ViewMode>
              </ViewModes>
            </>
          }
        >
          <Grid>
            <Tile $col={1} $row={1}><PaperFolder /><TileName>CEA</TileName></Tile>
            <Tile $col={2} $row={1}><ImageFolder /><TileName $ls={0.2}>tessdata-main</TileName></Tile>
            <Tile $col={3} $row={1}><PaperFolder /><TileName>WeGame</TileName></Tile>
            <Tile $col={10} $row={1}><PhotoWrap><Photo>之骑士</Photo></PhotoWrap><TileName $ls={0.3}>14.jpg</TileName></Tile>
            <Tile $col={1} $row={2}><WinRarArt /><TileName $ls={0.1}>CEA.zip</TileName></Tile>
            <Tile $col={2} $row={2}><RegistryArt /><TileName $ls={0.2}>{"EnableWindows\nPhotoViewer.re\ng"}</TileName></Tile>
            <Tile $col={3} $row={2}><WinRarArt /><TileName>{"tessdata-main.z\nip"}</TileName></Tile>
          </Grid>
        </Explorer>

        <Explorer
          floating
          title="下载"
          icon={<DownArrowIcon />}
          toolName="应用程序工具"
          toolColor="#e9c9fb"
          toolWidth={101}
          crumbs={["此电脑", "下载"]}
          tree={coveredTree}
          activeKey="q-down"
          search={'搜索"下载"'}
          status={
            <>
              <StatusTexts>
                <Text $ls={0.15}>10 个项目</Text>
                <StatusRule $m="0 10px" />
                <Text $ls={0.15}>选中 1 个项目</Text>
                <Gap $w={9} />
                <Text $ls={0.3}>62.4 MB</Text>
                <StatusRule $m="0 0 0 10px" />
              </StatusTexts>
              <ViewModes $pr={4}>
                <ViewMode $on><DetailsGlyph /></ViewMode>
                <ViewMode><ThumbGlyph /></ViewMode>
              </ViewModes>
            </>
          }
        >
          <ListPane>
            <ListHead>
              <HeadCell>名称</HeadCell>
              <HeadCell>修改日期</HeadCell>
              <HeadCell>类型</HeadCell>
              <HeadCell>大小<SortMark><ChevronSmall dir="down" size={9} width={1} /></SortMark></HeadCell>
            </ListHead>
            {files.map(([name, kind, date, type, size], i) => (
              <ListRow key={i} $active={i === 0}>
                <NameCell>
                  {kind === "fox" && <FoxIcon />}
                  {kind === "rar" && <RarSmall />}
                  {name && <Text>{name}</Text>}
                </NameCell>
                <Text $ls={0.2}>{date}</Text>
                <Text $ls={type.startsWith("Win") ? 0.35 : 0}>{type}</Text>
                <SizeCell>{size}</SizeCell>
              </ListRow>
            ))}
          </ListPane>
        </Explorer>

        <Widget>
          <Shield>
            <svg width="18" height="20" viewBox="0 0 18 20"><path d="M9 1.200C11 2.500 14 3.200 16.500 3.200v7.300c0 4-3.500 6.500-7.500 8-4-1.500-7.500-4-7.500-8V3.200C4 3.200 7 2.500 9 1.200z" fill="#f4421b" stroke="#3d63d8" strokeWidth="1.400" /></svg>
            <ShieldCount>1</ShieldCount>
          </Shield>
          <Gauge>
            <svg width="44" height="44" viewBox="0 0 44 44">
              <defs><linearGradient id="arc" x1="0" y1="0" x2="0" y2="1"><stop offset="0" stopColor="#e5c81e" /><stop offset=".35" stopColor="#8fd061" /><stop offset="1" stopColor="#2fc0b4" /></linearGradient></defs>
              <circle cx="22" cy="22" r="21" fill="#31333f" />
              <circle cx="22" cy="22" r="19" fill="none" stroke="#555763" strokeWidth="1.500" />
              <path d="M3 22a19 19 0 0 0 38 0" fill="none" stroke="url(#arc)" strokeWidth="2" />
            </svg>
            <GaugeLabel>50<small>%</small></GaugeLabel>
          </Gauge>
          <Speed $mt={7}>
            <svg width="6" height="8" viewBox="0 0 6 8"><path d="M3 0l3 3.500H3.800V8H2.200V3.500H0z" fill="#19a7ff" /></svg>
            <span>2.6<small>K/s</small></span>
          </Speed>
          <Speed $mt={9}>
            <svg width="6" height="8" viewBox="0 0 6 8"><path d="M3 8l3-3.500H3.800V0H2.200v4.500H0z" fill="#16c25b" /></svg>
            <span>6.1<small>K/s</small></span>
          </Speed>
        </Widget>

        <Dialog>
          <DialogHead>
            <WeGameIcon />
            <DialogTitle>提示</DialogTitle>
            <svg width="11" height="11" viewBox="0 0 11 11"><path d="M1 1l9 9M10 1l-9 9" stroke="#8b8b8d" strokeWidth="1.700" /></svg>
          </DialogHead>
          <DialogBody>
            <Line>黑剑<Text $ls={0.5}>VS</Text>凌风<Text $ls={0.6}>(56110747)</Text></Line>
            <Line>您的账号于<Text $ls={0.63}>2024-06-15 16:32:20</Text>在另一设备<Text $ls={0.47}>(iZ8vbg7l657ZN88)</Text>登录</Line>
            <Line>了<Text $ls={0.15}>WeGame</Text>，已被迫下线。</Line>
            <Line $mt={15}>如果这不是您本人的操作，那么您的密码很可能已泄露。建议您<Link>修改密码</Link></Line>
            <Line>或紧急冻结QQ账号。</Line>
          </DialogBody>
          <DialogFoot>
            <PillButton $primary>重新登录</PillButton>
            <PillButton>关闭</PillButton>
          </DialogFoot>
        </Dialog>

        <Taskbar>
          <SystemSlot>
            <svg width="16" height="16" viewBox="0 0 16 16"><path d="M0 2.300l6.500-.9v6.100H0zM7.300 1.300L16 0v7.500H7.300zM0 8.300h6.500v6.200L0 13.600zM7.300 8.300H16V16l-8.700-1.300z" fill="#fff" /></svg>
          </SystemSlot>
          <SystemSlot>
            <svg width="17" height="16" viewBox="0 0 17 16" fill="none" stroke="#fff" strokeWidth="1.200"><path d="M1.500 4.500h9v7h-9zM.5.500v1.500h11V.5M.5 15.500V14h11v1.500M15 0v3M15 8v8" /><path d="M14 4h2v3h-2z" fill="#fff" stroke="none" /></svg>
          </SystemSlot>
          <Apps>
            {taskApps.map((a, i) => (
              <AppSlot key={i} $active={i === taskApps.length - 1}>{a}</AppSlot>
            ))}
          </Apps>
          <Tray>
            {trayIcons.map((t, i) => (
              <TraySlot key={i} $lit={i === 0}>{t}</TraySlot>
            ))}
          </Tray>
          <Clock>
            <div>16:38</div>
            <div>2024/6/15/周六</div>
          </Clock>
        </Taskbar>
      </Desktop>
    </>
  );
}
